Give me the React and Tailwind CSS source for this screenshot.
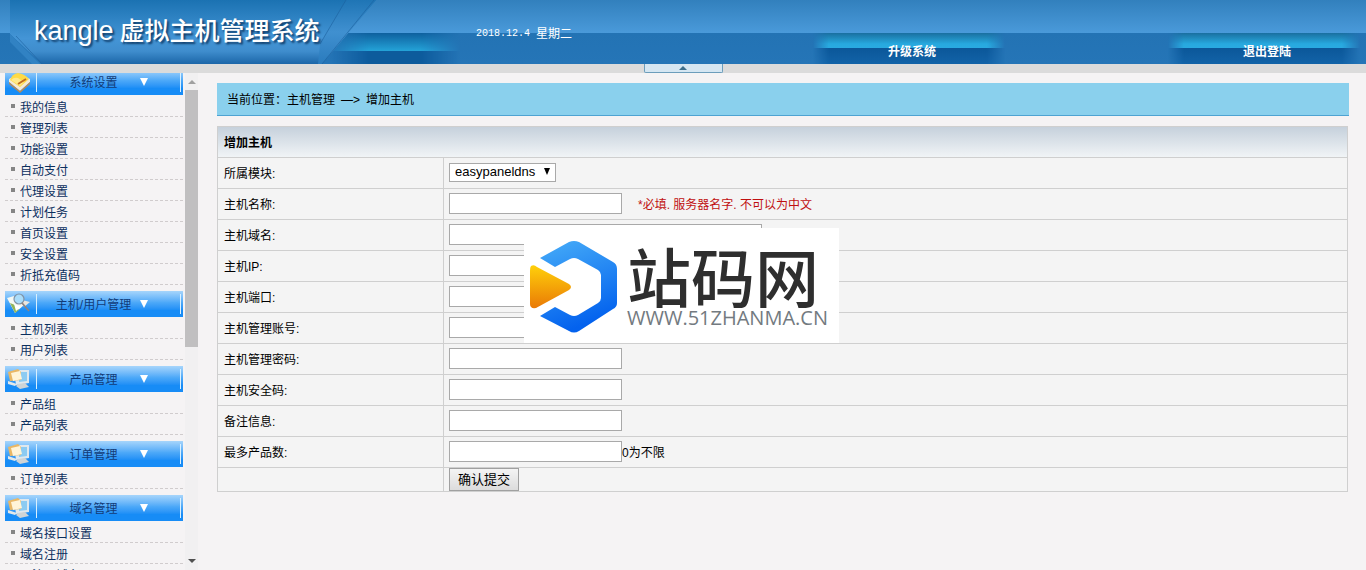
import { useState } from "react";

const menu = [
  {
    title: "系统设置",
    icon: "book",
    items: [
      "我的信息",
      "管理列表",
      "功能设置",
      "自动支付",
      "代理设置",
      "计划任务",
      "首页设置",
      "安全设置",
      "折抵充值码",
    ],
  },
  { title: "主机/用户管理", icon: "search", items: ["主机列表", "用户列表"] },
  { title: "产品管理", icon: "screen", items: ["产品组", "产品列表"] },
  { title: "订单管理", icon: "screen", items: ["订单列表"] },
  {
    title: "域名管理",
    icon: "screen",
    items: ["域名接口设置", "域名注册", "已注册域名"],
  },
];

const fields = [
  {
    name: "name",
    label: "主机名称:",
    width: "w-[173px]",
    hint: "*必填. 服务器名字. 不可以为中文",
  },
  { name: "host", label: "主机域名:", width: "w-[313px]" },
  { name: "ip", label: "主机IP:", width: "w-[173px]" },
  { name: "port", label: "主机端口:", width: "w-[173px]" },
  { name: "user", label: "主机管理账号:", width: "w-[173px]" },
  { name: "passwd", label: "主机管理密码:", width: "w-[173px]" },
  { name: "skey", label: "主机安全码:", width: "w-[173px]" },
  { name: "mem", label: "备注信息:", width: "w-[173px]" },
  { name: "max", label: "最多产品数:", width: "w-[173px]", suffix: "0为不限" },
];

function BookIcon() {
  return (
    <svg viewBox="0 0 24 22" className="h-[22px] w-6">
      <path d="M2 11 L13 20 L23 11 L23 8 L12 3 L2 8Z" fill="#f3ead8" />
      <path d="M2 11 L13 20 L23 11 L23 13 L13 22 L2 13Z" fill="#b78a58" />
      <path d="M3 9 Q5 3 11 2 Q18 3 22 8 L13 16Z" fill="#ffda45" />
      <path d="M4 9 Q7 6 11 7 L17 11 L13 15Z" fill="#ffe98a" />
      <path d="M11 13 L19 8" stroke="#c06a20" strokeWidth="2" />
    </svg>
  );
}

function SearchIcon() {
  return (
    <svg viewBox="0 0 24 22" className="h-[22px] w-6">
      <path d="M0 5 L7 3 L17 12 L8 20Z" fill="#f4f8f4" />
      <path d="M3 10 L8 20 L12 17 L8 12Z" fill="#8fb45a" />
      <path d="M7 11 L9 18 L14 14Z" fill="#fff" />
      <path d="M15 7 L23 9 L17 14Z" fill="#ece6de" />
      <circle cx="12" cy="6" r="5" fill="#a9dcfa" stroke="#8093a6" strokeWidth="1.2" />
      <path d="M15 10 L22 18" stroke="#8f8480" strokeWidth="1.6" />
    </svg>
  );
}

function ScreenIcon() {
  return (
    <svg viewBox="0 0 24 22" className="h-[22px] w-6">
      <path d="M7 2 L22 2 L22 15 L9 17Z" fill="#dfe8ee" />
      <path d="M12 4 L20 4 L20 13 L12 14Z" fill="#8ccbf2" />
      <path d="M11 16 L18 15 L22 19 L13 21 L9 18Z" fill="#cfd4d6" />
      <path d="M1 4 L11 1 L14 4 L14 12 L3 13Z" fill="#e9b765" />
      <path d="M4 5 L13 3 L15 11 L6 13Z" fill="#fff4d8" />
      <path d="M1 13 L10 16 L8 18 L1 16Z" fill="#e3e8e9" />
    </svg>
  );
}

const icons = { book: BookIcon, search: SearchIcon, screen: ScreenIcon };

function Header() {
  return (
    <header className="flex h-16 shrink-0 bg-[linear-gradient(#3280bd_0px,#4a9ada_33px,#2373b4_33px,#2575b7_64px)]">
      <div className="relative h-16 w-[465px] shrink-0">
        <svg viewBox="0 0 465 64" className="absolute inset-0 h-16 w-full" aria-hidden="true">
          <defs>
            <linearGradient id="banner" x1="0" y1="0" x2="0" y2="1">
              <stop offset="0" stopColor="#1b72b2" />
              <stop offset="0.6" stopColor="#4495d6" />
              <stop offset="0.8" stopColor="#3f8dcd" />
              <stop offset="1" stopColor="#1b66a8" />
            </linearGradient>
            <linearGradient id="edge" x1="0" y1="0" x2="0" y2="1">
              <stop offset="0" stopColor="#1f75b5" />
              <stop offset="0.5" stopColor="#4090d0" />
              <stop offset="1" stopColor="#2a7bbd" />
            </linearGradient>
            <linearGradient id="glow" x1="0" y1="0" x2="0" y2="1">
              <stop offset="0" stopColor="#0e609e" />
              <stop offset="1" stopColor="#24a3d8" />
            </linearGradient>
            <linearGradient id="sides">
              <stop offset="0" stopColor="#fff" stopOpacity="0" />
              <stop offset="0.3" stopColor="#fff" />
              <stop offset="0.7" stopColor="#fff" />
              <stop offset="1" stopColor="#fff" stopOpacity="0" />
            </linearGradient>
            <mask id="fade">
              <rect x="330" y="33" width="130" height="31" fill="url(#sides)" />
            </mask>
          </defs>
          <g mask="url(#fade)">
            <rect x="330" y="33" width="130" height="18" fill="url(#glow)" />
            <rect x="330" y="51" width="130" height="13" fill="#0d5b9c" />
          </g>
          <path d="M10 0 H376 L322 64 H42 L10 34Z" fill="url(#banner)" />
          <path d="M346 0 L320 44 L318 64 H322 L376 0Z" fill="url(#edge)" />
          <path d="M346 0 L320 44 M374 0 L322 64 M16 36 L42 64" stroke="#1d609f" strokeOpacity="0.6" fill="none" />
          <path d="M10 34 L40 64 H32 L10 42Z" fill="#3182c3" />
        </svg>
        <h1 className="relative flex gap-1.5 pt-4 pl-[34px] font-['Liberation_Sans','Noto_Sans_CJK_SC',sans-serif] text-[25px] leading-[30px] font-medium whitespace-nowrap text-white [text-shadow:2px_2px_2px_#12406d]">
          <span className="text-[27px] font-normal">kangle</span>
          <span>虚拟主机管理系统</span>
        </h1>
      </div>
      <p className="ml-[11px] flex gap-1.5 pt-[26px] leading-4 whitespace-nowrap text-white">
        <span className="font-['Liberation_Mono',monospace] text-[10px]">2018.12.4</span>
        <span>星期二</span>
      </p>
      <nav className="ml-auto flex gap-[155px] self-end">
        <HeaderLink>升级系统</HeaderLink>
        <HeaderLink>退出登陆</HeaderLink>
      </nav>
    </header>
  );
}

function HeaderLink({ children }) {
  return (
    <a
      href="#"
      className="relative flex h-[31px] w-[200px] items-center justify-center pt-1.5 pl-0.5 font-bold text-white"
    >
      <span className="absolute inset-y-0 left-0 w-full bg-[linear-gradient(#1a6fa0_0px,#27a9df_11px,#2aaae1_15px,#0b5799_15px,#1263a8_31px)] [mask-image:linear-gradient(90deg,transparent_1%,black_9%,black_88%,transparent_97%)]" />
      <span className="relative">{children}</span>
    </a>
  );
}

function MenuSection({ title, icon, items }) {
  const [open, setOpen] = useState(true);
  const Icon = icons[icon];

  return (
    <section className="mb-1.5">
      <button
        onClick={() => setOpen(!open)}
        className="flex h-[26px] w-full items-center bg-linear-to-b from-[#a6d5fb] via-[#4ba8f8] via-45% to-[#178cf6] to-75% px-0.5 text-[#123c78]"
      >
        <Icon />
        <span className="ml-[5px] h-5 w-px bg-[#d8f0ff]" />
        <span className="flex-1 pt-0.5 pl-2.5 text-center">{title}</span>
        <svg viewBox="0 0 8 8" className="h-2 w-2" aria-hidden="true">
          <path d="M0 0 H8 L4 8Z" fill="#fff" />
        </svg>
        <span className="ml-8 h-5 w-px bg-[#d8f0ff]" />
      </button>
      {open && (
        <ul className="pt-px">
          {items.map((item) => (
            <li
              key={item}
              className="flex h-[21px] items-center border-b border-dashed border-[#d0cccd] pl-1.5"
            >
              <span className="mr-[5px] h-1 w-1 bg-[#858585]" />
              <a href="#" className="pt-1 text-[#0b2f5e] hover:underline">
                {item}
              </a>
            </li>
          ))}
        </ul>
      )}
    </section>
  );
}

function Sidebar() {
  return (
    <aside className="flex w-[200px] shrink-0 overflow-hidden pl-[5px]">
      <nav className="-mt-1 w-[178px]">
        {menu.map((section) => (
          <MenuSection key={section.title} {...section} />
        ))}
      </nav>
      {/* Scrollbar */}
      <div className="ml-0.5 flex w-[13px] flex-col items-center bg-[#f1f0f1]">
        <svg viewBox="0 0 8 4" className="mt-[7px] h-1 w-2 shrink-0" aria-hidden="true">
          <path d="M0 4 L4 0 L8 4Z" fill="#a0a0a0" />
        </svg>
        <div className="mt-1.5 h-[257px] w-full shrink-0 bg-[#c0bfc0]" />
        <svg viewBox="0 0 8 4" className="mt-auto mb-[7px] h-1 w-2 shrink-0" aria-hidden="true">
          <path d="M0 0 L4 4 L8 0Z" fill="#505050" />
        </svg>
      </div>
    </aside>
  );
}

function HostForm() {
  return (
    <form className="pr-px" onSubmit={(e) => e.preventDefault()}>
      <table className="w-full border-collapse border border-[#cfcfcf] bg-[#f4f4f4] [&_td]:border [&_td]:border-[#cfcfcf]">
        <thead>
          <tr className="h-[31px] bg-linear-to-b from-[#c6d1dc] to-[#f2f5f7]">
            <th colSpan={2} className="px-1.5 pt-0.5 text-left font-bold">
              增加主机
            </th>
          </tr>
        </thead>
        <tbody>
          <tr className="h-[31px]">
            <td className="w-1/5 px-1.5 pt-0.5">
              <label htmlFor="type">所属模块:</label>
            </td>
            <td className="px-[5px] pb-0.5">
              <div className="relative w-[107px]">
                <select
                  id="type"
                  className="block h-[19px] w-full appearance-none border border-[#a9a9a9] bg-white pl-[5px] font-['Liberation_Sans',sans-serif] text-[13px] leading-4"
                >
                  <option>easypaneldns</option>
                </select>
                <svg viewBox="0 0 6 7" className="pointer-events-none absolute top-[5px] right-1.5 h-[7px] w-1.5" aria-hidden="true">
                  <path d="M0 0 H6 L3 7Z" fill="#000" />
                </svg>
              </div>
            </td>
          </tr>
          {fields.map(({ name, label, width, hint, suffix }) => (
            <tr key={name} className="h-[31px]">
              <td className="px-1.5 pt-0.5">
                <label htmlFor={name}>{label}</label>
              </td>
              <td className="px-[5px] pb-0.5">
                <div className="flex items-center">
                  <input
                    id={name}
                    name={name}
                    type={name === "passwd" ? "password" : "text"}
                    className={`h-[21px] border border-[#a9a9a9] bg-white px-1 ${width}`}
                  />
                  {hint && <span className="ml-4 pt-1 text-[#c01010]">{hint}</span>}
                  {suffix && <span className="pt-1">{suffix}</span>}
                </div>
              </td>
            </tr>
          ))}
          <tr className="h-6">
            <td></td>
            <td className="px-[5px]">
              <button
                type="submit"
                className="block h-[23px] border border-[#a0a0a0] bg-linear-to-b from-[#f4f4f4] to-[#dcdcdc] px-2 text-[13px] leading-4"
              >
                确认提交
              </button>
            </td>
          </tr>
        </tbody>
      </table>
    </form>
  );
}

function Watermark() {
  return (
    <div className="absolute top-[155px] left-[324px] flex h-[115px] w-[315px] bg-white">
      <svg viewBox="0 0 100 115" className="h-[115px] w-[100px] shrink-0" aria-hidden="true">
        <defs>
          <linearGradient id="hex" x1="0" y1="0" x2="0.3" y2="1">
            <stop offset="0" stopColor="#47adf8" />
            <stop offset="1" stopColor="#0362ee" />
          </linearGradient>
          <linearGradient id="play" x1="0" y1="0" x2="0" y2="1">
            <stop offset="0" stopColor="#ffd00a" />
            <stop offset="1" stopColor="#ea7a06" />
          </linearGradient>
        </defs>
        <path
          d="M16 30 L45 14 Q50 12 55 14 L89 34 Q93 36 93 41 V75 Q93 79 89 81 L55 103 Q50 106 45 103 L16 88 L31 79 L46 87 Q50 89 54 87 L74 75 Q77 73 77 70 V47 Q77 44 74 42 L54 31 Q50 29 46 31 L31 39Z"
          fill="url(#hex)"
        />
        <path d="M7 38 Q10 36 13 39 L45 56 Q49 59 45 62 L12 80 Q6 81 6 76 V43 Q6 39 7 38Z" fill="url(#play)" />
      </svg>
      <div className="flex flex-col pt-3.5 pl-[3px] whitespace-nowrap">
        <span className="font-['Noto_Sans_CJK_SC',sans-serif] text-[64px] leading-[64px] font-medium text-[#2e2e2e]">
          站码网
        </span>
        <span className="font-['Open_Sans',sans-serif] text-[20px] leading-6 text-[#737a80]">
          WWW.51ZHANMA.CN
        </span>
      </div>
    </div>
  );
}

export default function App() {
  return (
    <div className="flex h-screen flex-col overflow-hidden bg-[#f5f3f4] font-['Liberation_Sans','Noto_Sans_CJK_SC',sans-serif] text-xs text-black">
      <Header />
      <div className="flex h-[9px] shrink-0 justify-center bg-[#dbdbdb]">
        <button
          aria-label="收起"
          className="flex h-[9px] w-[79px] items-center justify-center rounded-b-xs border border-t-0 border-[#6c9dbb] bg-[#d5e6f2]"
        >
          <svg viewBox="0 0 8 4" className="h-1 w-2" aria-hidden="true">
            <path d="M0 4 L4 0 L8 4Z" fill="#3d6f8c" />
          </svg>
        </button>
      </div>
      <div className="flex min-h-0 flex-1">
        <Sidebar />
        <main className="relative min-w-0 flex-1 px-[17px] pt-2.5">
          <div className="mb-2.5 flex h-[33px] items-center gap-1.5 border-b border-[#4ea3d2] bg-[#8ad0ed] px-2.5 pt-0.5">
            <span>当前位置：主机管理</span>
            <span>—&gt;</span>
            <span>增加主机</span>
          </div>
          <HostForm />
          <Watermark />
        </main>
      </div>
    </div>
  );
}
